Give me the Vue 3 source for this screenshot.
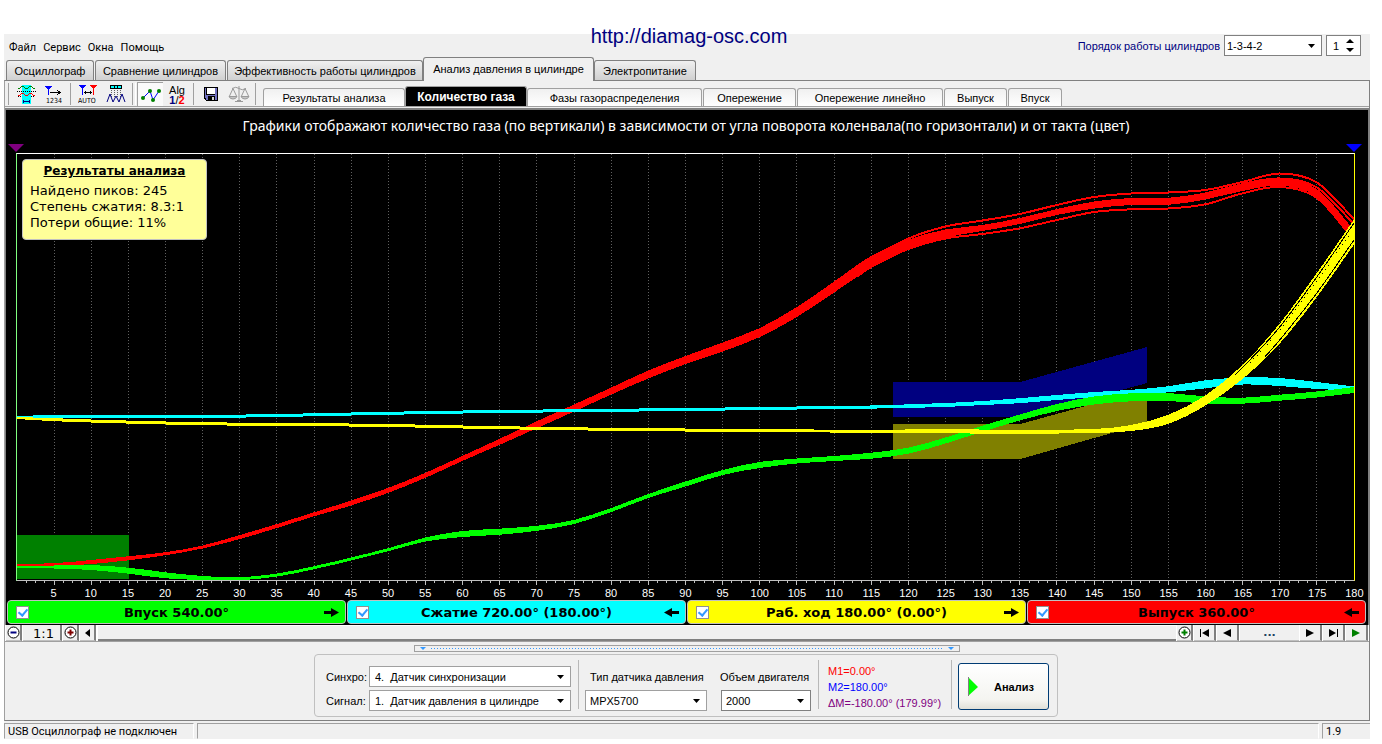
<script setup>
import { ref } from 'vue'

const menu = ['Файл', 'Сервис', 'Окна', 'Помощь']

const mainTabs = [
  { label: 'Осциллограф', w: 88 },
  { label: 'Сравнение цилиндров', w: 131 },
  { label: 'Эффективность работы цилиндров', w: 196 },
  { label: 'Анализ давления в цилиндре', w: 171 },
  { label: 'Электропитание', w: 102 }
]
const activeMain = ref(3)

const subTabs = [
  { label: 'Результаты анализа', w: 142 },
  { label: 'Количество газа', w: 122 },
  { label: 'Фазы газораспределения', w: 175 },
  { label: 'Опережение', w: 93 },
  { label: 'Опережение линейно', w: 146 },
  { label: 'Выпуск', w: 63 },
  { label: 'Впуск', w: 54 }
]
const activeSub = ref(1)

const strokes = [
  { label: 'Впуск 540.00°', color: '#00ff00', dir: 'right', on: true },
  { label: 'Сжатие 720.00° (180.00°)', color: '#00ffff', dir: 'left', on: true },
  { label: 'Раб. ход 180.00° (0.00°)', color: '#ffff00', dir: 'right', on: true },
  { label: 'Выпуск 360.00°', color: '#ff0000', dir: 'left', on: true }
]
const checks = ref(strokes.map((s) => s.on))

const degrees = Array.from({ length: 36 }, (_, i) => (i + 1) * 5)
const gridLines = degrees.slice(0, 35)
const minorTicks = Array.from({ length: 144 }, (_, i) => (i + 1) * 1.25)

const PLOT_W = 1338
const PLOT_TOP = 154
const sx = (deg) => (deg * PLOT_W) / 180

function smooth(points) {
  let d = ''
  for (let i = 0; i < points.length - 1; i++) {
    const p0 = points[i - 1] || points[i]
    const p1 = points[i]
    const p2 = points[i + 1]
    const p3 = points[i + 2] || p2
    const step = (p2[0] - p1[0]) / 3
    const m1 = (p2[1] - p0[1]) / (p2[0] - p0[0] || 1)
    const m2 = (p3[1] - p1[1]) / (p3[0] - p1[0] || 1)
    d += ` C${(p1[0] + step).toFixed(1)} ${(p1[1] + m1 * step).toFixed(1)} ${(p2[0] - step).toFixed(1)} ${(p2[1] - m2 * step).toFixed(1)} ${p2[0].toFixed(1)} ${p2[1].toFixed(1)}`
  }
  return d
}
function line(data) {
  const pts = data.map(([d, y]) => [sx(d), y - PLOT_TOP])
  return `M${pts[0][0]} ${pts[0][1]}` + smooth(pts)
}
function band(data) {
  const top = data.map(([d, y, t]) => [sx(d), y - PLOT_TOP - t / 2])
  const bottom = data.map(([d, y, t]) => [sx(d), y - PLOT_TOP + t / 2]).reverse()
  return `M${top[0][0]} ${top[0][1]}` + smooth(top) + ` L${bottom[0][0]} ${bottom[0][1]}` + smooth(bottom) + ' Z'
}

const cyan = [
  [0, 417, 2], [5, 416.5, 3], [25, 416.5, 3], [35, 415.5, 3], [45, 414, 3], [60, 412, 3], [75, 410.7, 3],
  [90, 409.5, 3], [105, 408, 3], [113.5, 407.3, 3], [125, 405, 4], [130, 403, 4], [135, 400.7, 5], [140, 397.5, 5],
  [145, 394.5, 5], [150, 392.3, 5], [155, 389.3, 6], [160, 384.3, 8], [165, 381, 7], [170, 382, 8], [175, 385.5, 7], [180, 388.5, 4]
]
const green = [
  [0, 566.5, 2], [5, 567, 3], [10, 567.5, 5], [15, 570.7, 6], [20, 575.3, 6], [25, 578, 4], [30, 578.7, 3],
  [35, 575, 3], [40, 567.7, 3], [45, 559, 3], [50, 549.7, 3], [55, 539.5, 4], [60, 534, 6], [65, 531.7, 6],
  [70, 528.3, 5], [75, 522, 4], [80, 510, 4], [85, 496, 4], [90, 484, 5], [95, 472.5, 5], [100, 465, 6],
  [105, 461, 5], [110, 458.5, 5], [115, 455.7, 6], [120, 450.7, 6], [125, 440.5, 6], [130, 428.7, 6],
  [135, 417.5, 6], [140, 407.5, 7], [145, 400.5, 8], [150, 397.3, 8], [155, 397, 8], [160, 400, 7],
  [165, 400.7, 6], [170, 397.7, 6], [175, 394.5, 6], [180, 390, 6]
]
const red = [
  [0, 565.5, 3], [5, 564.7, 3], [10, 562, 4], [15, 558.3, 4], [20, 553.7, 3], [25, 547, 3], [30, 537, 4],
  [35, 526, 4], [40, 514.3, 4], [45, 503, 5], [50, 490.3, 5], [55, 475.3, 5], [60, 458.3, 5], [65, 441.7, 6],
  [70, 424.7, 7], [75, 408, 7], [80, 391, 7], [85, 374.5, 8], [90, 360, 8], [95, 347, 9], [100, 332.5, 9],
  [105, 312, 10], [110, 287, 11], [115, 262, 12], [120, 244.5, 10], [125, 233.5, 8], [130, 228, 6],
  [135, 221, 6], [140, 212, 6], [145, 205, 7], [150, 201.5, 7], [155, 201.3, 7], [160, 196, 7],
  [165, 187, 8], [170, 181.7, 8], [175, 193, 8], [180, 236, 12]
]
const redLines = [
  [[113, 267], [115, 258], [120, 238.5], [125, 226.5], [130, 220.5], [135, 214], [140, 205], [145, 197], [150, 193.5], [155, 192.5], [160, 190], [165, 182], [170, 173.5], [175, 182.5], [180, 219]],
  [[113, 277], [115, 267], [120, 249], [125, 238.5], [130, 234], [135, 228.3], [140, 220], [145, 212], [150, 209.3], [155, 208.5], [160, 204.3], [165, 193.3], [170, 187], [175, 198], [180, 240]],
  [[165, 184], [170, 178.5], [175, 187.5], [180, 224]]
]
const yellow = [
  [0, 418, 2], [5, 419.7, 3], [10, 421, 3], [20, 423, 3], [30, 424.2, 3], [40, 424.7, 3], [50, 425.5, 3],
  [60, 427, 3], [70, 428.3, 3], [80, 429.3, 3], [90, 430, 3], [100, 430.7, 3], [115, 431.2, 3], [125, 431.3, 4],
  [135, 431.7, 4], [145, 431, 4], [150, 428, 6], [155, 419.3, 9], [160, 400.5, 10], [165, 372, 14],
  [170, 333.5, 20], [175, 285, 24], [180, 232, 25]
]
const yellowGaps = [
  { dash: 'none', points: [[164, 375], [167, 352], [170, 327], [175, 277], [180, 223]] },
  { dash: '1 4', points: [[166, 363], [170, 330], [175, 281], [180, 228]] },
  { dash: 'none', points: [[168, 357], [170, 340], [175, 293], [180, 240]] }
]

const syncOptions = ['4.\u00a0 Датчик синхронизации']
const signalOptions = ['1.\u00a0 Датчик давления в цилиндре']
const sync = ref(0)
const signal = ref(0)
const sensor = ref('MPX5700')
const volume = ref('2000')
const order = ref('1-3-4-2')
const cylinder = ref('1')
</script>

<template>
  <div class="page">
    <a class="site" href="#">http://diamag-osc.com</a>
    <div class="window">
      <header class="head">
        <nav class="menu">
          <button v-for="m in menu" :key="m" class="menu-item">{{ m }}</button>
        </nav>
        <div class="order">
          <label for="order">Порядок работы цилиндров</label>
          <span class="combo order-combo">
            <select id="order" v-model="order"><option>1-3-4-2</option></select>
            <svg class="caret" width="7" height="4" viewBox="0 0 7 4"><path d="M0 0H7L3.5 4Z" /></svg>
          </span>
          <span class="spin">
            <input v-model="cylinder" type="text" aria-label="Цилиндр" />
            <svg width="8" height="13" viewBox="0 0 8 13"><path d="M0 4H8L4 0ZM0 9H8L4 13Z" /></svg>
          </span>
        </div>
      </header>

      <div class="tabs">
        <button
          v-for="(t, i) in mainTabs" :key="t.label" class="tab" :class="{ active: i === activeMain }"
          :style="{ width: t.w + 'px' }" @click="activeMain = i"
        >{{ t.label }}</button>
      </div>

      <main class="panel">
        <div class="toolbar">
          <i class="sep"></i>
          <button class="tool" aria-label="Обзор сигнала">
            <svg width="20" height="20" viewBox="0 0 20 20" shape-rendering="crispEdges" fill="none">
              <path d="M6 1H15V20H6Z" fill="#00ffff" />
              <path d="M2 4.5H4M4 3.5H5M5 2.5H8M8 3.5H9M9 4.5H12M12 3.5H13M13 2.5H16M16 3.5H17M17 4.5H19" stroke="#008000" />
              <path d="M1 7.5H20" stroke="#000" stroke-dasharray="1 1" />
              <path d="M2 11.5H4M4 10.5H5M5 9.5H8M8 10.5H9M9 11.5H12M12 10.5H13M13 9.5H16M16 10.5H17M17 11.5H19" stroke="#f00" />
              <path d="M2 12.5H6M15 12.5H19" stroke="#000" stroke-dasharray="1 1" />
              <path d="M7 17.5H14M7.5 16V19M13.5 16V19" stroke="#000080" />
            </svg>
          </button>
          <button class="tool" aria-label="Нумерация">
            <svg width="20" height="20" viewBox="0 0 20 20" shape-rendering="crispEdges">
              <path d="M1 2H8L5 6V11H4V6Z" fill="#0000ff" />
              <path d="M6 8.5H16M13 6L16 8.5L13 11" stroke="#000" fill="none" />
              <text x="2" y="19" font-size="7">1234</text>
            </svg>
          </button>
          <i class="sep"></i>
          <button class="tool" aria-label="Автоматически">
            <svg width="20" height="20" viewBox="0 0 20 20" shape-rendering="crispEdges">
              <path d="M1 1H8L5 5V11H4V5Z" fill="#0000ff" />
              <path d="M12 1H19L16 5V11H15V5Z" fill="#ff0000" />
              <path d="M6 8.5H14M7.5 7V10M12.5 7V10" stroke="#000" fill="none" />
              <text x="0" y="19" font-size="7">AUTO</text>
            </svg>
          </button>
          <button class="tool" aria-label="Пики">
            <svg width="20" height="20" viewBox="0 0 20 20" fill="none">
              <g shape-rendering="crispEdges">
                <path d="M4.5 1.5H15.5V4.5H4.5Z" fill="#00ffff" stroke="#000" />
                <path d="M8.5 2V5M11.5 2V5" stroke="#000" />
                <path d="M5.5 6V13M8.5 6V13M11.5 6V13M14.5 6V13" stroke="#606060" stroke-dasharray="1 1" />
              </g>
              <path d="M1 18L4 10L7 18L10 12L13 18L16 10L19 18" stroke="#000080" />
            </svg>
          </button>
          <i class="sep double"></i>
          <button class="tool pressed" aria-label="Графики">
            <svg width="22" height="20" viewBox="0 0 22 20">
              <path d="M3 13L10 6L13 15L19 6" stroke="#0000ff" fill="none" />
              <g fill="#008000"><circle cx="3" cy="13" r="2" /><circle cx="10" cy="6" r="2" /><circle cx="13" cy="15" r="2" /><circle cx="19" cy="6" r="2" /></g>
            </svg>
          </button>
          <button class="tool alg" aria-label="Алгоритм">
            <span>Alg</span>
            <span><b class="one">1</b>/<b class="two">2</b></span>
          </button>
          <i class="sep"></i>
          <button class="tool" aria-label="Сохранить">
            <svg width="16" height="16" viewBox="0 0 16 16" shape-rendering="crispEdges">
              <path d="M1 1H15V15H3L1 13Z" fill="#000" />
              <path d="M2 2H14V14H3V12H2Z" fill="#7070c0" />
              <path d="M3 1H12V9H3Z" fill="#000" />
              <path d="M4 2H12V8H4Z" fill="#fff" />
              <path d="M5 10H12V14H5Z" fill="#000" />
              <path d="M9 11H11V14H9Z" fill="#d0d0d0" />
            </svg>
          </button>
          <button class="tool" aria-label="Сравнить">
            <svg width="22" height="18" viewBox="0 0 22 18" fill="none" stroke="#9a9a9a">
              <path d="M11 1V15M7 16.5H15M9 15.5H13M4 3.5Q8 1 11 3.5T18 3.5" />
              <path d="M5 3.5L1.5 11M5 3.5L8.5 11M17 3.5L13.5 11M17 3.5L20.5 11" />
              <path d="M1 11.5H9Q8 14 5 14T1 11.5ZM13 11.5H21Q20 14 17 14T13 11.5Z" fill="#c4c4c4" />
            </svg>
          </button>
          <i class="sep"></i>
          <div class="subtabs">
            <button
              v-for="(t, i) in subTabs" :key="t.label" class="subtab" :class="{ active: i === activeSub }"
              :style="{ width: t.w + 'px' }" @click="activeSub = i"
            >{{ t.label }}</button>
          </div>
        </div>

        <section class="scope">
          <h1 class="chart-title">Графики отображают количество газа (по вертикали) в зависимости от угла поворота коленвала(по горизонтали) и от такта (цвет)</h1>
          <div class="markers">
            <svg width="16" height="8" viewBox="0 0 16 8"><path d="M0 0H16L8 8Z" fill="#800080" /></svg>
            <svg width="16" height="8" viewBox="0 0 16 8"><path d="M0 0H16L8 8Z" fill="#0000ff" /></svg>
          </div>
          <div class="plot">
            <svg class="curves" viewBox="0 0 1338 426" preserveAspectRatio="none" shape-rendering="crispEdges">
              <line v-for="g in gridLines" :key="g" class="grid" :x1="sx(g)" :x2="sx(g)" y1="0" y2="426" />
              <path d="M0 381H112V425H0Z" fill="#008000" />
              <path d="M877 228H1004L1131 193V229L1004 263H877Z" fill="#000080" />
              <path d="M877 270H1004L1131 235V269L1004 305H877Z" fill="#808000" />
              <path :d="band(red)" fill="#ff0000" />
              <path v-for="(l, i) in redLines" :key="'r' + i" class="thin" :d="line(l)" stroke="#ff0000" />
              <path :d="band(cyan)" fill="#00ffff" />
              <path :d="band(green)" fill="#00ff00" />
              <path :d="band(yellow)" fill="#ffff00" />
              <path v-for="(l, i) in yellowGaps" :key="'y' + i" class="gap" :stroke-dasharray="l.dash" :d="line(l.points)" />
            </svg>
            <aside class="note">
              <h2>Результаты анализа</h2>
              <p>Найдено пиков: 245</p>
              <p>Степень сжатия: 8.3:1</p>
              <p>Потери общие: 11%</p>
            </aside>
          </div>
          <svg class="ticks" viewBox="0 0 1338 5" preserveAspectRatio="none" shape-rendering="crispEdges">
            <line v-for="m in minorTicks" :key="m" :x1="sx(m)" :x2="sx(m)" y1="0" :y2="m % 5 ? 2 : 4" />
          </svg>
          <div class="labels"><span v-for="d in degrees" :key="d">{{ d }}</span></div>

          <div class="strokes">
            <label v-for="(s, i) in strokes" :key="s.label" class="stroke" :style="{ background: s.color }">
              <input v-model="checks[i]" type="checkbox" />
              <span>{{ s.label }}</span>
              <svg width="15" height="9" viewBox="0 0 15 9">
                <path :d="s.dir === 'right' ? 'M0 3H7V0L15 4.5L7 9V6H0Z' : 'M15 3H8V0L0 4.5L8 9V6H15Z'" />
              </svg>
            </label>
          </div>
        </section>

        <div class="scroller">
          <button class="sb zoom" aria-label="Уменьшить">
            <svg width="13" height="13" viewBox="0 0 13 13"><circle cx="6.5" cy="6.5" r="5.5" fill="#fff" stroke="#000" /><path d="M3.5 6.5H9.5" stroke="#000080" stroke-width="2" /></svg>
          </button>
          <button class="sb ratio">1:1</button>
          <button class="sb zoom" aria-label="Увеличить">
            <svg width="13" height="13" viewBox="0 0 13 13"><circle cx="6.5" cy="6.5" r="5.5" fill="#fff" stroke="#000" /><path d="M3.5 6.5H9.5M6.5 3.5V9.5" stroke="#800000" stroke-width="2" /></svg>
          </button>
          <button class="sb zoom" aria-label="Влево"><svg width="5" height="8" viewBox="0 0 5 8"><path d="M5 0V8L0 4Z" /></svg></button>
          <div class="track"></div>
          <button class="sb zoom" aria-label="Добавить">
            <svg width="13" height="13" viewBox="0 0 13 13"><circle cx="6.5" cy="6.5" r="5.5" fill="#fff" stroke="#000" /><path d="M3.5 6.5H9.5M6.5 3.5V9.5" stroke="#008000" stroke-width="2" /></svg>
          </button>
          <button class="sb nav" aria-label="В начало"><svg width="11" height="8" viewBox="0 0 11 8"><path d="M1 0H2V8H1ZM10 0V8L3 4Z" /></svg></button>
          <button class="sb nav" aria-label="Назад"><svg width="8" height="8" viewBox="0 0 8 8"><path d="M8 0V8L0 4Z" /></svg></button>
          <button class="sb dots">...</button>
          <button class="sb nav" aria-label="Вперёд"><svg width="8" height="8" viewBox="0 0 8 8"><path d="M0 0V8L8 4Z" /></svg></button>
          <button class="sb nav" aria-label="В конец"><svg width="11" height="8" viewBox="0 0 11 8"><path d="M9 0H10V8H9ZM1 0V8L8 4Z" /></svg></button>
          <button class="sb nav" aria-label="Пуск"><svg width="8" height="8" viewBox="0 0 8 8"><path d="M0 0V8L8 4Z" fill="#008000" /></svg></button>
        </div>

        <div class="bottom">
          <div class="grip">
            <svg width="6" height="3" viewBox="0 0 6 3"><path d="M0 0H6L3 3Z" fill="#3399ff" /></svg>
            <i></i>
            <svg width="6" height="3" viewBox="0 0 6 3"><path d="M0 0H6L3 3Z" fill="#3399ff" /></svg>
          </div>
          <form class="controls" @submit.prevent>
            <div class="pair">
              <label for="sync">Синхро:</label>
              <span class="combo">
                <select id="sync" v-model="sync"><option v-for="(o, i) in syncOptions" :key="o" :value="i">{{ o }}</option></select>
                <svg class="caret" width="7" height="4" viewBox="0 0 7 4"><path d="M0 0H7L3.5 4Z" /></svg>
              </span>
              <label for="signal">Сигнал:</label>
              <span class="combo">
                <select id="signal" v-model="signal"><option v-for="(o, i) in signalOptions" :key="o" :value="i">{{ o }}</option></select>
                <svg class="caret" width="7" height="4" viewBox="0 0 7 4"><path d="M0 0H7L3.5 4Z" /></svg>
              </span>
            </div>
            <i class="vline"></i>
            <div class="field sensor">
              <label for="sensor">Тип датчика давления</label>
              <span class="combo">
                <select id="sensor" v-model="sensor"><option>MPX5700</option></select>
                <svg class="caret" width="7" height="4" viewBox="0 0 7 4"><path d="M0 0H7L3.5 4Z" /></svg>
              </span>
            </div>
            <div class="field volume">
              <label for="volume">Объем двигателя</label>
              <span class="combo">
                <select id="volume" v-model="volume"><option>2000</option></select>
                <svg class="caret" width="7" height="4" viewBox="0 0 7 4"><path d="M0 0H7L3.5 4Z" /></svg>
              </span>
            </div>
            <i class="vline"></i>
            <div class="readout">
              <span class="m1">M1=0.00°</span>
              <span class="m2">M2=180.00°</span>
              <span class="dm">ΔM=-180.00° (179.99°)</span>
            </div>
            <i class="vline"></i>
            <button class="analyse">
              <svg width="10" height="19" viewBox="0 0 10 19"><path d="M0 0V19L10 10Z" fill="#00ff00" /><path d="M.5 0V19" stroke="#808080" /></svg>
              <span>Анализ</span>
            </button>
          </form>
        </div>
      </main>

      <footer class="status">
        <span class="cell first">USB Осциллограф не подключен</span>
        <span class="cell mid"></span>
        <span class="cell last">1.9</span>
      </footer>
    </div>
  </div>
</template>

<style>
html, body, #app { height: 100%; }
body { margin: 0; background: #fff; }
</style>

<style scoped>
* { box-sizing: border-box; }
.page {
  position: relative; display: flex; height: 100%; min-height: 560px; padding: 34px 12px 5px 4px; background: #fff;
  font-family: "Liberation Sans", Arial, sans-serif; font-size: 11px; line-height: 14px; color: #000;
}
button, select, input { font: inherit; color: inherit; margin: 0; padding: 0; border: 0; background: none; border-radius: 0; outline: none; }
svg { display: block; flex: none; }
.site {
  position: absolute; top: 24px; left: 0; right: 4px; text-align: center;
  font-size: 20px; line-height: 24px; color: #000080; text-decoration: none; pointer-events: none;
}
.window { flex: 1; display: flex; flex-direction: column; min-width: 0; min-height: 0; background: #f0f0f0; }

.head { display: flex; justify-content: space-between; height: 24px; flex: none; }
.menu { display: flex; gap: 7px; padding: 7px 0 0 5px; font-family: Roboto, sans-serif; }
.menu-item { height: 14px; line-height: 14px; }
.order { display: flex; align-items: flex-start; gap: 4px; padding: 1px 9px 0 0; }
.order label { color: #000080; padding-top: 4px; }
.combo { position: relative; display: flex; height: 21px; background: #fff; border: 1px solid #a0a0a0; }
.combo select { appearance: none; flex: 1; width: 100%; padding: 0 20px 0 4px; }
.caret { position: absolute; right: 6px; top: 8px; pointer-events: none; }
.order-combo { width: 98px; border-color: #808080; }
.order-combo select { padding-left: 2px; }
.spin { display: flex; align-items: center; width: 35px; height: 21px; padding-right: 6px; background: #fff; border: 1px solid #808080; }
.spin input { flex: 1; width: 0; padding-left: 6px; }

.tabs { display: flex; align-items: flex-end; gap: 1px; height: 22px; padding-left: 2px; flex: none; }
.tab {
  height: 20px; border: 1px solid #808080; border-bottom: 0; border-radius: 3px 3px 0 0; white-space: nowrap;
  background: linear-gradient(#f0f0f0, #d0d0d0);
}
.tab.active { height: 24px; margin: 0 -1px -1px; padding-bottom: 2px; background: #f0f0f0; position: relative; }
.panel { flex: 1; display: flex; flex-direction: column; min-height: 0; border: 1px solid #808080; border-left-color: #a0a0a0; }

.toolbar { display: flex; align-items: stretch; height: 26px; flex: none; padding-left: 1px; border-bottom: 1px solid #a0a0a0; }
.sep { width: 1px; margin: 2px 3px 1px 2px; background: #a0a0a0; }
.sep.double { border-left: 1px solid #a0a0a0; background: none; width: 4px; border-right: 1px solid #fff; margin-right: 1px; }
.tool { display: flex; align-items: center; justify-content: center; width: 28px; }
.tool text { font-family: "DejaVu Sans Condensed", "DejaVu Sans", sans-serif; }
.tool.pressed { width: 26px; margin-top: 1px; background: #fafafa; border-left: 1px solid #a0a0a0; border-top: 1px solid #a0a0a0; }
.tool.alg { flex-direction: column; padding-top: 2px; font-size: 11px; line-height: 10px; }
.one { color: #000080; }
.two { color: #ff0000; }
.subtabs { display: flex; align-items: flex-end; gap: 1px; padding-left: 4px; }
.subtab {
  height: 18px; border: 1px solid #a0a0a0; border-bottom: 0; border-radius: 3px 3px 0 0; white-space: nowrap;
  background: linear-gradient(#f0f0f0, #fff);
}
.subtab.active { height: 20px; margin: 0 -1px; background: #000; color: #fff; font-weight: 700; font-size: 12px; }

.scope {
  flex: 1; display: flex; flex-direction: column; min-height: 0; margin-top: 1px; padding: 0 2px 1px 0;
  background: #000; border-top: 2px solid #808080; border-left: 1px solid #808080; border-right: 1px solid #808080; overflow: hidden;
}
.chart-title {
  margin: 0; height: 34px; text-align: center; color: #fff; font: 400 14px/32px "Noto Sans", sans-serif; white-space: nowrap;
}
.markers { display: flex; justify-content: space-between; padding: 0 4px 0 2px; height: 9px; }
.plot {
  position: relative; flex: 1; min-height: 0; display: flex; margin: 0 11px 0 10px;
  border: 1px solid #fff; border-left-color: #80ff80; border-right-color: #ffff00; border-bottom-color: #c0c0c0;
}
.curves { flex: 1; width: 0; height: 100%; }
.grid { stroke: #606060; stroke-dasharray: 1 2; vector-effect: non-scaling-stroke; }
.thin { fill: none; stroke-width: 2; vector-effect: non-scaling-stroke; }
.gap { fill: none; stroke: #000; stroke-width: 1; vector-effect: non-scaling-stroke; }
.note {
  position: absolute; left: 5px; top: 5px; width: 185px; height: 81px; padding: 3px 7px;
  background: #ffff99; border: 1px solid #c0c0c0; border-radius: 4px; font: 13px/16px "DejaVu Sans", sans-serif;
}
.note h2 { margin: 0 0 4px; font: 700 12px/16px "DejaVu Sans", sans-serif; text-align: center; text-decoration: underline; white-space: nowrap; }
.note p { margin: 0; white-space: nowrap; }
.ticks { height: 5px; margin: 0 12px 0 11px; flex: none; }
.ticks line { stroke: #c0c0c0; vector-effect: non-scaling-stroke; }
.labels {
  display: grid; grid-template-columns: repeat(36, 1fr); margin: 0 -7px 0 29px; height: 14px; flex: none;
  color: #fff; font-size: 11px; line-height: 15px; text-align: center;
}
.strokes { display: flex; gap: 1px; height: 24px; flex: none; padding-left: 1px; }
.stroke {
  flex: 1; display: flex; align-items: center; padding: 1px 6px 0 8px; border: 1px solid #c0c0c0; border-radius: 4px;
  font: 700 13px/16px "DejaVu Sans", sans-serif;
}
.stroke span { flex: 1; text-align: center; white-space: nowrap; }
.stroke input { appearance: none; width: 13px; height: 13px; background: #fff; border: 1px solid #909090; display: grid; place-items: center; }
.stroke input:checked::after { content: ""; width: 4px; height: 7px; margin-bottom: 2px; border: solid #3399ff; border-width: 0 2px 2px 0; transform: rotate(40deg); }

.scroller { display: flex; height: 17px; flex: none; background: #fff; border-bottom: 1px solid #a0a0a0; padding-left: 1px; }
.sb { display: flex; align-items: center; justify-content: center; background: #f0f0f0; border-right: 2px solid #808080; border-bottom: 1px solid #c0c0c0; margin-right: 1px; }
.sb.zoom { width: 16px; }
.sb.nav { width: 22px; }
.sb.ratio { width: 39px; padding: 2px 0 0 4px; font: 13px/14px "DejaVu Sans", sans-serif; }
.sb.dots { width: 59px; font: 700 11px/14px "DejaVu Sans", sans-serif; color: #204060; border-right: 0; }
.track { flex: 1; background: #f0f0f0; border-top: 1px solid #fff; border-bottom: 2px solid #808080; margin: 0 1px; }

.bottom { display: flex; flex-direction: column; align-items: center; height: 78px; flex: none; padding-top: 3px; }
.grip { display: flex; align-items: center; gap: 5px; width: 546px; height: 7px; padding: 0 5px; border: 1px solid #a0a0a0; }
.grip i { flex: 1; height: 1px; background: repeating-linear-gradient(90deg, #3399ff 0 1px, transparent 1px 3px); }
.controls { display: flex; margin: 2px 2px 0 0; height: 63px; padding: 5px 8px 0 11px; border: 1px solid #c0c0c0; border-radius: 4px; }
.pair { display: grid; grid-template-columns: 43px 202px; grid-auto-rows: 21px; row-gap: 3px; padding-top: 6px; align-content: start; align-items: center; white-space: nowrap; }
.pair select { padding-left: 5px; }
.vline { width: 1px; height: 49px; margin-left: 7px; background: #b8b8b8; }
.field { display: flex; flex-direction: column; padding-top: 10px; gap: 6px; white-space: nowrap; }
.sensor { margin-left: 6px; width: 122px; }
.sensor label { padding-left: 5px; }
.volume { margin-left: 13px; width: 91px; }
.volume .combo { width: 90px; border-color: #808080; margin-left: 1px; }
.readout { display: flex; flex-direction: column; width: 116px; margin-left: 9px; padding-top: 3px; line-height: 16px; white-space: nowrap; }
.m1 { color: #ff0000; }
.m2 { color: #0000ff; }
.dm { color: #800080; }
.analyse {
  display: flex; align-items: center; gap: 16px; width: 91px; height: 47px; margin: 3px 0 0 6px; padding-left: 9px;
  border: 1px solid #003c74; border-radius: 3px; background: linear-gradient(#fff, #f4f4f0 80%, #e0e0d8); font-weight: 700;
}

.status { display: flex; gap: 3px; height: 18px; flex: none; padding-top: 2px; font-family: Roboto, sans-serif; }
.cell { border: 1px solid; border-color: #a0a0a0 #fff #f0f0f0 #a0a0a0; padding-left: 3px; line-height: 15px; white-space: nowrap; }
.first { width: 190px; }
.mid { flex: 1; }
.last { width: 48px; border-right: 0; }
</style>
